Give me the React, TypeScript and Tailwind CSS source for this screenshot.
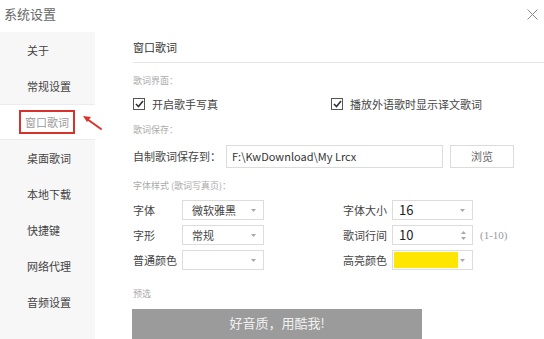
import React from 'react';

const cjk = { fontFamily: '"Noto Sans CJK SC", "Noto Sans", sans-serif' };

const navItems = ['关于', '常规设置', '窗口歌词', '桌面歌词', '本地下载', '快捷键', '网络代理', '音频设置'];

const Caret: React.FC = () => (
  <svg className="mr-[7px]" width="5" height="3" viewBox="0 0 5 3">
    <path d="M0 0 L5 0 L2.5 3 Z" fill="#a8a8a8" />
  </svg>
);

const Spinner: React.FC = () => (
  <svg className="mr-[6px]" width="5" height="11" viewBox="0 0 5 11">
    <path d="M0 4 L5 4 L2.5 1 Z" fill="#a8a8a8" />
    <path d="M0 7 L5 7 L2.5 10 Z" fill="#a8a8a8" />
  </svg>
);

const Select: React.FC<{ value?: string; width: string; swatch?: boolean; spinner?: boolean; big?: boolean }> = ({
  value,
  width,
  swatch,
  spinner,
  big
}) => (
  <div className={`${width} flex h-[20px] items-center justify-between border border-[#dcdcdc] bg-white`}>
    {swatch ? (
      <div className="ml-[1px] h-[16px] w-[64px] bg-[#ffe600]" />
    ) : (
      <span className={big ? 'pl-[6px] text-[13px] text-[#222]' : 'pl-[9px] text-[11px] text-[#444]'}>{value}</span>
    )}
    {spinner ? <Spinner /> : <Caret />}
  </div>
);

const Checkbox: React.FC<{ label: string }> = ({ label }) => (
  <div className="flex items-center">
    <span className="flex h-[12px] w-[12px] items-center justify-center border border-[#555] bg-white">
      <svg width="9" height="8" viewBox="0 0 9 8">
        <path d="M1 4 L3.5 6.5 L8 1" fill="none" stroke="#333" strokeWidth="1.6" />
      </svg>
    </span>
    <span className="ml-[7px] text-[11px] text-[#444]">{label}</span>
  </div>
);

const SectionLabel: React.FC<{ text: string; className?: string }> = ({ text, className }) => (
  <div className={`flex h-[18px] items-center text-[9px] text-[#aaa] ${className ?? ''}`}>{text}</div>
);

const App: React.FC = () => {
  return (
    <div className="relative h-[339px] w-[544px] overflow-hidden bg-white" style={cjk}>
      {/* title bar */}
      <div className="flex h-[32px] items-start justify-between">
        <span className="ml-[4px] mt-[4px] text-[13px] text-[#666]">系统设置</span>
        <svg className="mr-[6px] mt-[9px]" width="11" height="11" viewBox="0 0 11 11">
          <path d="M0.5 0.5 L10.5 10.5 M10.5 0.5 L0.5 10.5" stroke="#8a8a8a" strokeWidth="1" />
        </svg>
      </div>

      <div className="flex h-[307px]">
        {/* sidebar */}
        <div className="w-[95px] bg-[#f7f7f7]">
          {navItems.map(item =>
            item === '窗口歌词' ? (
              <div
                key={item}
                className="flex h-[36px] items-center border-y border-[#ececec] bg-white pl-[19px]"
              >
                <span className="flex h-[24px] w-[56px] items-center justify-center border-2 border-[#d9312c] text-[11px] text-[#999]">
                  {item}
                </span>
              </div>
            ) : (
              <div key={item} className="flex h-[36px] items-center pl-[27px] text-[11px] text-[#444]">
                {item}
              </div>
            )
          )}
        </div>

        {/* content */}
        <div className="flex-1 pl-[38px]">
          <div className="flex h-[31px] items-center border-b border-[#e6e6e6] text-[11px] text-[#333]">
            窗口歌词
          </div>

          <SectionLabel text="歌词界面：" className="mt-[9px]" />
          <div className="mt-[4px] grid h-[20px] grid-cols-[198px_1fr] items-center">
            <Checkbox label="开启歌手写真" />
            <Checkbox label="播放外语歌时显示译文歌词" />
          </div>

          <SectionLabel text="歌词保存：" className="mt-[7px]" />
          <div className="mt-[6px] flex h-[23px] items-center">
            <span className="w-[93px] text-[11px] text-[#444]">自制歌词保存到：</span>
            <div className="flex h-[23px] w-[217px] items-center border border-[#dcdcdc] pl-[5px] text-[11px] text-[#333]">
              F:\KwDownload\My Lrcx
            </div>
            <div className="ml-[7px] flex h-[23px] w-[64px] items-center justify-center border border-[#dcdcdc] text-[11px] text-[#666]">
              浏览
            </div>
          </div>

          <SectionLabel text="字体样式 (歌词写真页)：" className="mt-[9px]" />
          <div className="mt-[5px] grid grid-cols-[210px_1fr] gap-y-[5px]">
            <div className="flex items-center">
              <span className="w-[49px] text-[11px] text-[#444]">字体</span>
              <Select value="微软雅黑" width="w-[82px]" />
            </div>
            <div className="flex items-center">
              <span className="w-[49px] text-[11px] text-[#444]">字体大小</span>
              <Select value="16" width="w-[81px]" big />
            </div>
            <div className="flex items-center">
              <span className="w-[49px] text-[11px] text-[#444]">字形</span>
              <Select value="常规" width="w-[82px]" />
            </div>
            <div className="flex items-center">
              <span className="w-[49px] text-[11px] text-[#444]">歌词行间</span>
              <Select value="10" width="w-[81px]" big spinner />
              <span className="ml-[7px] text-[11px] text-[#999]" style={{ fontFamily: '"Liberation Serif", serif' }}>
                (1-10)
              </span>
            </div>
            <div className="flex items-center">
              <span className="w-[49px] text-[11px] text-[#444]">普通颜色</span>
              <Select value="" width="w-[82px]" />
            </div>
            <div className="flex items-center">
              <span className="w-[49px] text-[11px] text-[#444]">高亮颜色</span>
              <Select width="w-[81px]" swatch />
            </div>
          </div>

          <SectionLabel text="预选" className="mt-[15px]" />
          <div className="ml-[-1px] mt-[6px] flex h-[40px] w-[290px] items-start justify-center bg-[#9b9b9b] pt-[4px] text-[13px] text-[#f0f0f0]">
            好音质，用酷我!
          </div>
        </div>
      </div>

      {/* red annotation arrow */}
      <svg className="absolute left-[80px] top-[112px]" width="24" height="20" viewBox="0 0 24 20">
        <path d="M21 17 L7 7" stroke="#e0302a" strokeWidth="2" strokeLinecap="round" />
        <path d="M3 4 L11 5 L7 10 Z" fill="#e0302a" />
      </svg>
    </div>
  );
};

export default App;
